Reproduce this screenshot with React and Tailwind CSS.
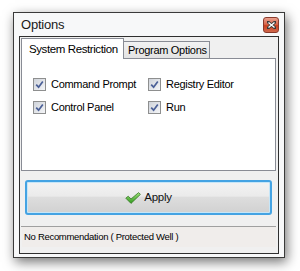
// App.jsx
export default function App() {
  const opciones = [
    "Command Prompt",
    "Registry Editor",
    "Control Panel",
    "Run",
  ];

  return (
    <div className="w-[300px] h-[271px] bg-white pt-[12px] pl-[13px] font-['Liberation_Sans',Arial,sans-serif] text-black overflow-hidden">
      {/* Ventana */}
      <div className="w-[272px] h-[246px] border border-[#3a3a3a] bg-[#f7f8f9] px-[5px] pb-[3px] flex flex-col shadow-[2px_4px_11px_rgba(0,0,0,0.55)]">
        {/* Barra de titulo */}
        <div className="h-[23px] flex items-center justify-between pl-[2px] pr-0">
          <span className="text-[13px] leading-none tracking-[-0.2px] text-[#1a1a1a]">Options</span>
          <CerrarBoton />
        </div>

        {/* Panel interior */}
        <div className="flex-1 border border-[#2f2f2f] bg-[#f0f0f0] flex flex-col">
          {/* Pestañas */}
          <div className="h-[21px] flex items-end pl-[1px]">
            <div className="relative z-10 h-[21px] mb-[-1px] w-[103px] bg-white border-t border-l border-r border-[#898c95] flex items-start pt-[4px] pl-[7px] text-[11.5px] tracking-[-0.4px] leading-[12px] whitespace-nowrap">
              System Restriction
            </div>
            <div className="h-[17px] w-[86px] bg-gradient-to-b from-[#f2f2f2] to-[#e3e3e3] border-t border-r border-[#898c95] flex items-center pl-[4px] text-[11px] tracking-[-0.3px] leading-none whitespace-nowrap">
              Program Options
            </div>
          </div>

          <div className="ml-[1px] w-[255px] h-[113px] border border-[#898c95] bg-white pt-[19px] pl-[11px]">
            <div className="grid grid-cols-[115px_auto] gap-y-[10px]">
              {opciones.map(o => (
                <label key={o} className="flex items-center gap-[5px] h-[13px]">
                  <Casilla />
                  <span className="text-[11px] tracking-[-0.3px] leading-none whitespace-nowrap">{o}</span>
                </label>
              ))}
            </div>
          </div>

          {/* Boton Apply */}
          <button className="mt-[9px] ml-[5px] w-[247px] h-[35px] rounded-[3px] border-2 border-[#44a3e3] bg-[linear-gradient(#f3f3f3,#ebebeb_45%,#dddddd_50%,#d1d1d1)] flex items-center justify-center gap-[3px] shadow-[inset_0_0_0_1px_#c6e6f8]">
            <CheckVerde />
            <span className="text-[11.5px] tracking-[-0.3px] leading-none text-[#111]">Apply</span>
          </button>

          {/* Barra de estado */}
          <div className="mt-[11px] ml-[1px] w-[255px] h-[1px] bg-[#a0a0a0]" />
          <div className="ml-[2px] w-[254px] h-[20px] bg-[#f0edeb] flex items-center pl-[2px] text-[9.5px] tracking-[-0.3px] leading-none whitespace-nowrap">
            No Recommendation ( Protected Well )
          </div>
        </div>
      </div>
    </div>
  );
}

function CerrarBoton() {
  return (
    <div className="w-[16px] h-[16px] rounded-[3px] border border-[#8a3a2c] bg-[linear-gradient(#e9a18f,#d9664c_45%,#c9401f_55%,#d0684c)] flex items-center justify-center">
      <svg width="9" height="8" viewBox="0 0 9 8">
        <path d="M1 1 L8 7 M8 1 L1 7" stroke="#3a3a3a" strokeWidth="3" strokeLinecap="square" />
        <path d="M1.5 1.5 L7.5 6.5 M7.5 1.5 L1.5 6.5" stroke="#ffffff" strokeWidth="1.4" />
      </svg>
    </div>
  );
}

function Casilla() {
  return (
    <span className="w-[13px] h-[13px] border border-[#8e8f8f] bg-white flex items-center justify-center shrink-0">
      <span className="w-[11px] h-[11px] bg-[linear-gradient(135deg,#cfd3da,#f4f5f7)] flex items-center justify-center">
        <svg width="9" height="9" viewBox="0 0 9 9">
          <path d="M1.2 4.6 L3.6 7.2 L7.8 1.4" fill="none" stroke="#4a5f97" strokeWidth="1.7" />
        </svg>
      </span>
    </span>
  );
}

function CheckVerde() {
  return (
    <svg width="16" height="12" viewBox="0 0 16 12">
      <defs>
        <linearGradient id="verde" x1="0" y1="0" x2="0" y2="1">
          <stop offset="0" stopColor="#9fe07a" />
          <stop offset="1" stopColor="#2f9a1e" />
        </linearGradient>
      </defs>
      <path d="M0.8 6.2 L3.2 4.2 L6 7 L13.6 0.6 L15.4 2.4 L6 11.4 Z" fill="url(#verde)" stroke="#3a7a2a" strokeWidth="0.8" strokeLinejoin="round" />
    </svg>
  );
}
